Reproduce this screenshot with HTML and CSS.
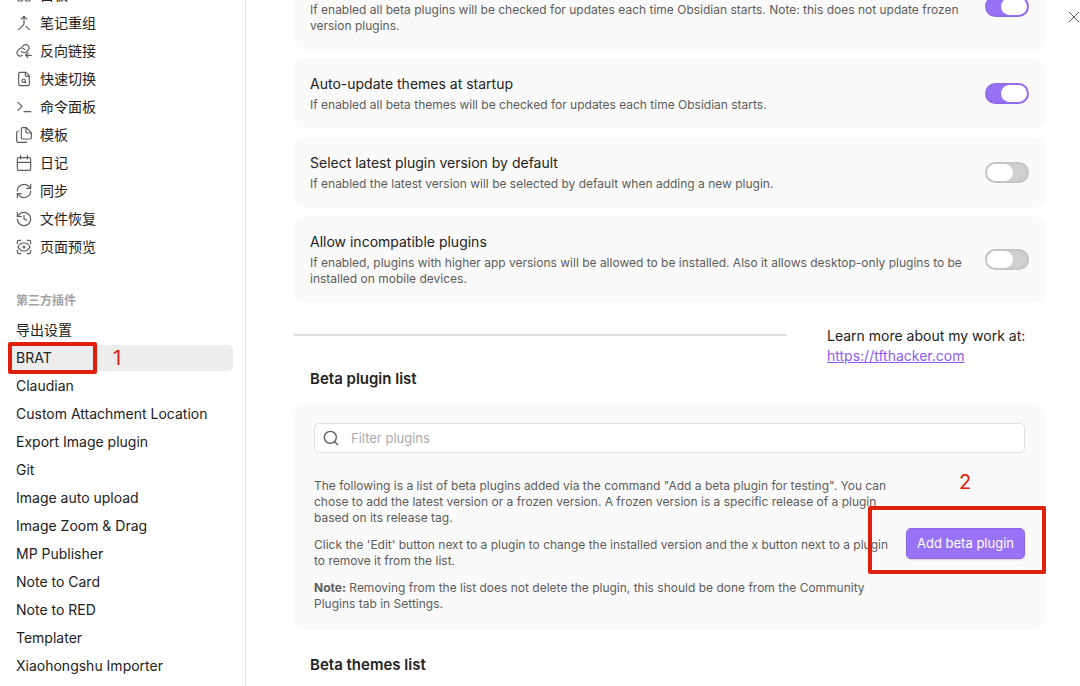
FILE: index.html
```html
<!DOCTYPE html>
<html lang="zh-CN">
<head>
<meta charset="utf-8">
<meta name="viewport" content="width=device-width, initial-scale=1">
<title>BRAT</title>
<link rel="stylesheet" href="styles.css">
</head>
<body>
<div class="settings">
  <nav class="sidebar">
    <ul class="nav-list nav-core">
      <li><a class="nav-item" href="#"><svg class="icon" viewBox="0 0 24 24"><rect x="3" y="3" width="7" height="9" rx="1"/><rect x="14" y="3" width="7" height="5" rx="1"/><rect x="14" y="12" width="7" height="9" rx="1"/><rect x="3" y="16" width="7" height="5" rx="1"/></svg>白板</a></li>
      <li><a class="nav-item" href="#"><svg class="icon" viewBox="0 0 24 24"><path d="m8 6 4-4 4 4"/><path d="M12 2v10.3a4 4 0 0 1-1.172 2.872L4 22"/><path d="m20 22-5-5"/></svg>笔记重组</a></li>
      <li><a class="nav-item" href="#"><svg class="icon" viewBox="0 0 24 24"><path d="M8 12a5 5 0 0 0 7.500 1.500l3-3a5 5 0 0 0-7-7L9.500 5.500"/><path d="M13 10a5 5 0 0 0-7.500-1.500l-3 3a5 5 0 0 0 7 7"/><path d="M23 18.500h-8"/><path d="m18 15-3.500 3.500L18 22"/></svg>反向链接</a></li>
      <li><a class="nav-item" href="#"><svg class="icon" viewBox="0 0 24 24"><path d="M15 2H6a2 2 0 0 0-2 2v16a2 2 0 0 0 2 2h12a2 2 0 0 0 2-2V7Z"/><path d="M14 2v4a2 2 0 0 0 2 2h4"/><circle cx="11.500" cy="14.500" r="2.500"/><path d="M13.300 16.300 15 18"/></svg>快速切换</a></li>
      <li><a class="nav-item" href="#"><svg class="icon" viewBox="0 0 24 24"><path d="m3 17 6-6-6-6"/><path d="M12 19h10"/></svg>命令面板</a></li>
      <li><a class="nav-item" href="#"><svg class="icon" viewBox="0 0 24 24"><path d="M15.500 1H10a2 2 0 0 0-2 2v13a2 2 0 0 0 2 2h11a2 2 0 0 0 2-2V8.500Z"/><path d="M15 1v6a2 2 0 0 0 2 2h6"/><path d="M4 6a3 3 0 0 0-3 3v11a3 3 0 0 0 3 3h10a2 2 0 0 0 2-1"/></svg>模板</a></li>
      <li><a class="nav-item" href="#"><svg class="icon" viewBox="0 0 24 24"><path d="M7 1v5M17 1v5"/><rect x="2" y="4" width="20" height="19" rx="2"/><path d="M2 11h20"/></svg>日记</a></li>
      <li><a class="nav-item" href="#"><svg class="icon" viewBox="0 0 24 24"><path d="M2 12a10 10 0 0 1 17-7l3 3"/><path d="M22 2v6h-6"/><path d="M22 12a10 10 0 0 1-17 7l-3-3"/><path d="M2 22v-6h6"/></svg>同步</a></li>
      <li><a class="nav-item" href="#"><svg class="icon" viewBox="0 0 24 24"><path d="M2 12A10 10 0 1 0 12 2a10.500 10.500 0 0 0-7.200 3L2 8"/><path d="M2 2v6h6"/><path d="M12 7v5l4 2"/></svg>文件恢复</a></li>
      <li><a class="nav-item" href="#"><svg class="icon" viewBox="0 0 24 24"><path d="M2 7V4a2 2 0 0 1 2-2h3"/><path d="M17 2h3a2 2 0 0 1 2 2v3"/><path d="M22 17v3a2 2 0 0 1-2 2h-3"/><path d="M7 22H4a2 2 0 0 1-2-2v-3"/><circle cx="12" cy="12" r="1.500"/><path d="M3 12s3-6 9-6 9 6 9 6-3 6-9 6-9-6-9-6"/></svg>页面预览</a></li>
    </ul>
    <h2 class="nav-heading">第三方插件</h2>
    <ul class="nav-list">
      <li><a class="nav-item" href="#">导出设置</a></li>
      <li class="marked"><a class="nav-item active" href="#">BRAT</a><span class="mark mark-one"></span><span class="mark-number number-one">1</span></li>
      <li><a class="nav-item" href="#">Claudian</a></li>
      <li><a class="nav-item" href="#">Custom Attachment Location</a></li>
      <li><a class="nav-item" href="#">Export Image plugin</a></li>
      <li><a class="nav-item" href="#">Git</a></li>
      <li><a class="nav-item" href="#">Image auto upload</a></li>
      <li><a class="nav-item" href="#">Image Zoom &amp; Drag</a></li>
      <li><a class="nav-item" href="#">MP Publisher</a></li>
      <li><a class="nav-item" href="#">Note to Card</a></li>
      <li><a class="nav-item" href="#">Note to RED</a></li>
      <li><a class="nav-item" href="#">Templater</a></li>
      <li><a class="nav-item" href="#">Xiaohongshu Importer</a></li>
    </ul>
  </nav>

  <main class="content">
    <section class="options">
      <div class="card option">
        <div class="option-text">
          <label class="option-name" for="update-plugins">Auto-update plugins at startup</label>
          <p class="description">If enabled all beta plugins will be checked for updates each time Obsidian starts. Note: this does not update frozen version plugins.</p>
        </div>
        <input class="toggle" type="checkbox" id="update-plugins" checked>
      </div>
      <div class="card option">
        <div class="option-text">
          <label class="option-name" for="update-themes">Auto-update themes at startup</label>
          <p class="description">If enabled all beta themes will be checked for updates each time Obsidian starts.</p>
        </div>
        <input class="toggle" type="checkbox" id="update-themes" checked>
      </div>
      <div class="card option">
        <div class="option-text">
          <label class="option-name" for="latest-version">Select latest plugin version by default</label>
          <p class="description">If enabled the latest version will be selected by default when adding a new plugin.</p>
        </div>
        <input class="toggle" type="checkbox" id="latest-version">
      </div>
      <div class="card option">
        <div class="option-text">
          <label class="option-name" for="incompatible">Allow incompatible plugins</label>
          <p class="description">If enabled, plugins with higher app versions will be allowed to be installed. Also it allows desktop-only plugins to be installed on mobile devices.</p>
        </div>
        <input class="toggle" type="checkbox" id="incompatible">
      </div>
    </section>

    <div class="about">
      <hr class="rule">
      <p class="about-text">Learn more about my work at:<br><a class="link" href="https://tfthacker.com">https://tfthacker.com</a></p>
    </div>

    <h3 class="section-title">Beta plugin list</h3>
    <section class="card plugin-list">
      <div class="search">
        <svg class="search-icon" viewBox="0 0 24 24"><circle cx="11" cy="11" r="9"/><path d="m22 22-4.500-4.500"/></svg>
        <input class="search-input" type="search" placeholder="Filter plugins" aria-label="Filter plugins">
      </div>
      <div class="list-intro">
        <div class="intro-text description">
          <p>The following is a list of beta plugins added via the command "Add a beta plugin for testing". You can chose to add the latest version or a frozen version. A frozen version is a specific release of a plugin based on its release tag.</p>
          <p>Click the 'Edit' button next to a plugin to change the installed version and the x button next to a plugin to remove it from the list.</p>
          <p><strong>Note:</strong> Removing from the list does not delete the plugin, this should be done from the Community Plugins tab in Settings.</p>
        </div>
        <div class="marked add-action">
          <button class="add-button" type="button">Add beta plugin</button>
          <span class="mark mark-two"></span>
          <span class="mark-number number-two">2</span>
        </div>
      </div>
    </section>
    <h3 class="section-title">Beta themes list</h3>
  </main>
  <button class="close" type="button" aria-label="Close"><svg viewBox="0 0 12 12"><path d="m1 1 10 10M11 1 1 11"/></svg></button>
</div>
</body>
</html>
```
FILE: styles.css
```css
* {
  box-sizing: border-box;
}

body {
  margin: 0;
  overflow: hidden;
  background: #fff;
  color: #222;
  font: 14px/20px Inter, "Noto Sans CJK SC", sans-serif;
}

p, h2, h3, ul {
  margin: 0;
  padding: 0;
}

.settings {
  display: flex;
  height: 100vh;
  position: relative;
  overflow: hidden;
}

/* Sidebar */
.sidebar {
  flex: 0 0 246px;
  padding: 0 12px 0 8px;
  border-right: 1px solid #e2e2e2;
}

.nav-core {
  margin-top: -19px;
}

.nav-list {
  list-style: none;
}

.nav-item {
  display: flex;
  align-items: center;
  gap: 8px;
  height: 28px;
  padding: 0 8px;
  border-radius: 5px;
  color: #222;
  text-decoration: none;
  white-space: nowrap;
}

.nav-item.active {
  height: 26px;
  margin: 1px 0;
  background: #ededed;
}

.icon {
  width: 16px;
  height: 16px;
  fill: none;
  stroke: #5c5c5c;
  stroke-width: 1.75;
  stroke-linecap: round;
  stroke-linejoin: round;
}

.nav-heading {
  padding: 30px 8px 5px;
  color: #a3a3a3;
  font-size: 12px;
  font-weight: 600;
}

/* Main column */
.content {
  flex: 1;
  min-width: 0;
  padding: 0 35px 0 48px;
}

.card {
  border-radius: 12px;
  background: #fafafa;
}

.options {
  display: flex;
  flex-direction: column;
  gap: 8px;
  margin-top: -37px;
}

.option {
  display: flex;
  align-items: center;
  gap: 16px;
  padding: 16px;
}

.option-text {
  flex: 1;
}

.option-name {
  display: block;
  margin-bottom: 3px;
}

.description {
  color: #5c5c5c;
  font-size: 12px;
  line-height: 16px;
}

.toggle {
  appearance: none;
  flex: none;
  width: 44px;
  height: 21px;
  margin: 0;
  padding: 2px;
  border-radius: 11px;
  background: #d0d0d0;
  box-shadow: inset 0 0 3px 1px rgba(0, 0, 0, 0.1);
}

.toggle::before {
  content: "";
  display: block;
  width: 26px;
  height: 17px;
  border-radius: 9px;
  background: #fff;
}

.toggle:checked {
  background: #9873f7;
}

.toggle:checked::before {
  margin-left: auto;
}

.about {
  display: grid;
  grid-template-columns: 493fr 218fr;
  gap: 40px;
  padding-top: 23px;
}

.rule {
  width: 100%;
  height: 2px;
  margin: 8px 0 0;
  border: 0;
  background: #e0e0e0;
}

.link {
  color: #8a5cf5;
}

.section-title {
  padding: 0 16px;
  font-size: 15px;
  font-weight: 600;
}

.about + .section-title {
  margin: 3px 0 15px;
}

.plugin-list {
  margin-bottom: 25px;
  padding: 19px 20px 18px;
}

.search {
  display: flex;
  align-items: center;
  gap: 12px;
  height: 30px;
  padding: 0 8px;
  border: 1px solid #e0e0e0;
  border-radius: 5px;
  background: #fff;
}

.search-icon {
  flex: none;
  width: 16px;
  height: 16px;
  fill: none;
  stroke: #5c5c5c;
  stroke-width: 2;
  stroke-linecap: round;
}

.search-input {
  flex: 1;
  min-width: 0;
  padding: 0;
  border: 0;
  outline: 0;
  background: none;
  font: inherit;
  font-size: 13px;
}

.search-input::placeholder {
  color: #ababab;
}

.list-intro {
  display: flex;
  align-items: center;
  gap: 8px;
  padding-top: 25px;
}

.intro-text {
  display: flex;
  flex: 1;
  flex-direction: column;
  gap: 11px;
}

.add-action {
  margin-bottom: 4px;
}

.add-button {
  display: block;
  height: 31px;
  padding: 0 10px;
  border: 1px solid #8c68e6;
  border-radius: 5px;
  background: #9873f7;
  box-shadow: 0 1px 2px rgba(0, 0, 0, 0.15);
  color: #fff;
  font: 13px/20px Inter, sans-serif;
  white-space: nowrap;
}

.close {
  position: absolute;
  top: 11px;
  right: 0;
  width: 12px;
  height: 12px;
  padding: 0;
  border: 0;
  background: none;
}

.close svg {
  display: block;
  fill: none;
  stroke: #5c5c5c;
}

/* Numbered red markers over the page */
.marked {
  position: relative;
}

.mark {
  position: absolute;
  border: 4px solid #df200c;
  border-radius: 2px;
  pointer-events: none;
}

.mark-one {
  top: -3px;
  left: 0;
  width: 89px;
  height: 32px;
}

.mark-two {
  inset: -22px -21px -15px -38px;
}

.mark-number {
  position: absolute;
  color: #df200c;
  font-size: 20px;
  line-height: 24px;
}

.number-one {
  top: 1px;
  left: 105px;
}

.number-two {
  top: -58px;
  left: 53px;
}
```
